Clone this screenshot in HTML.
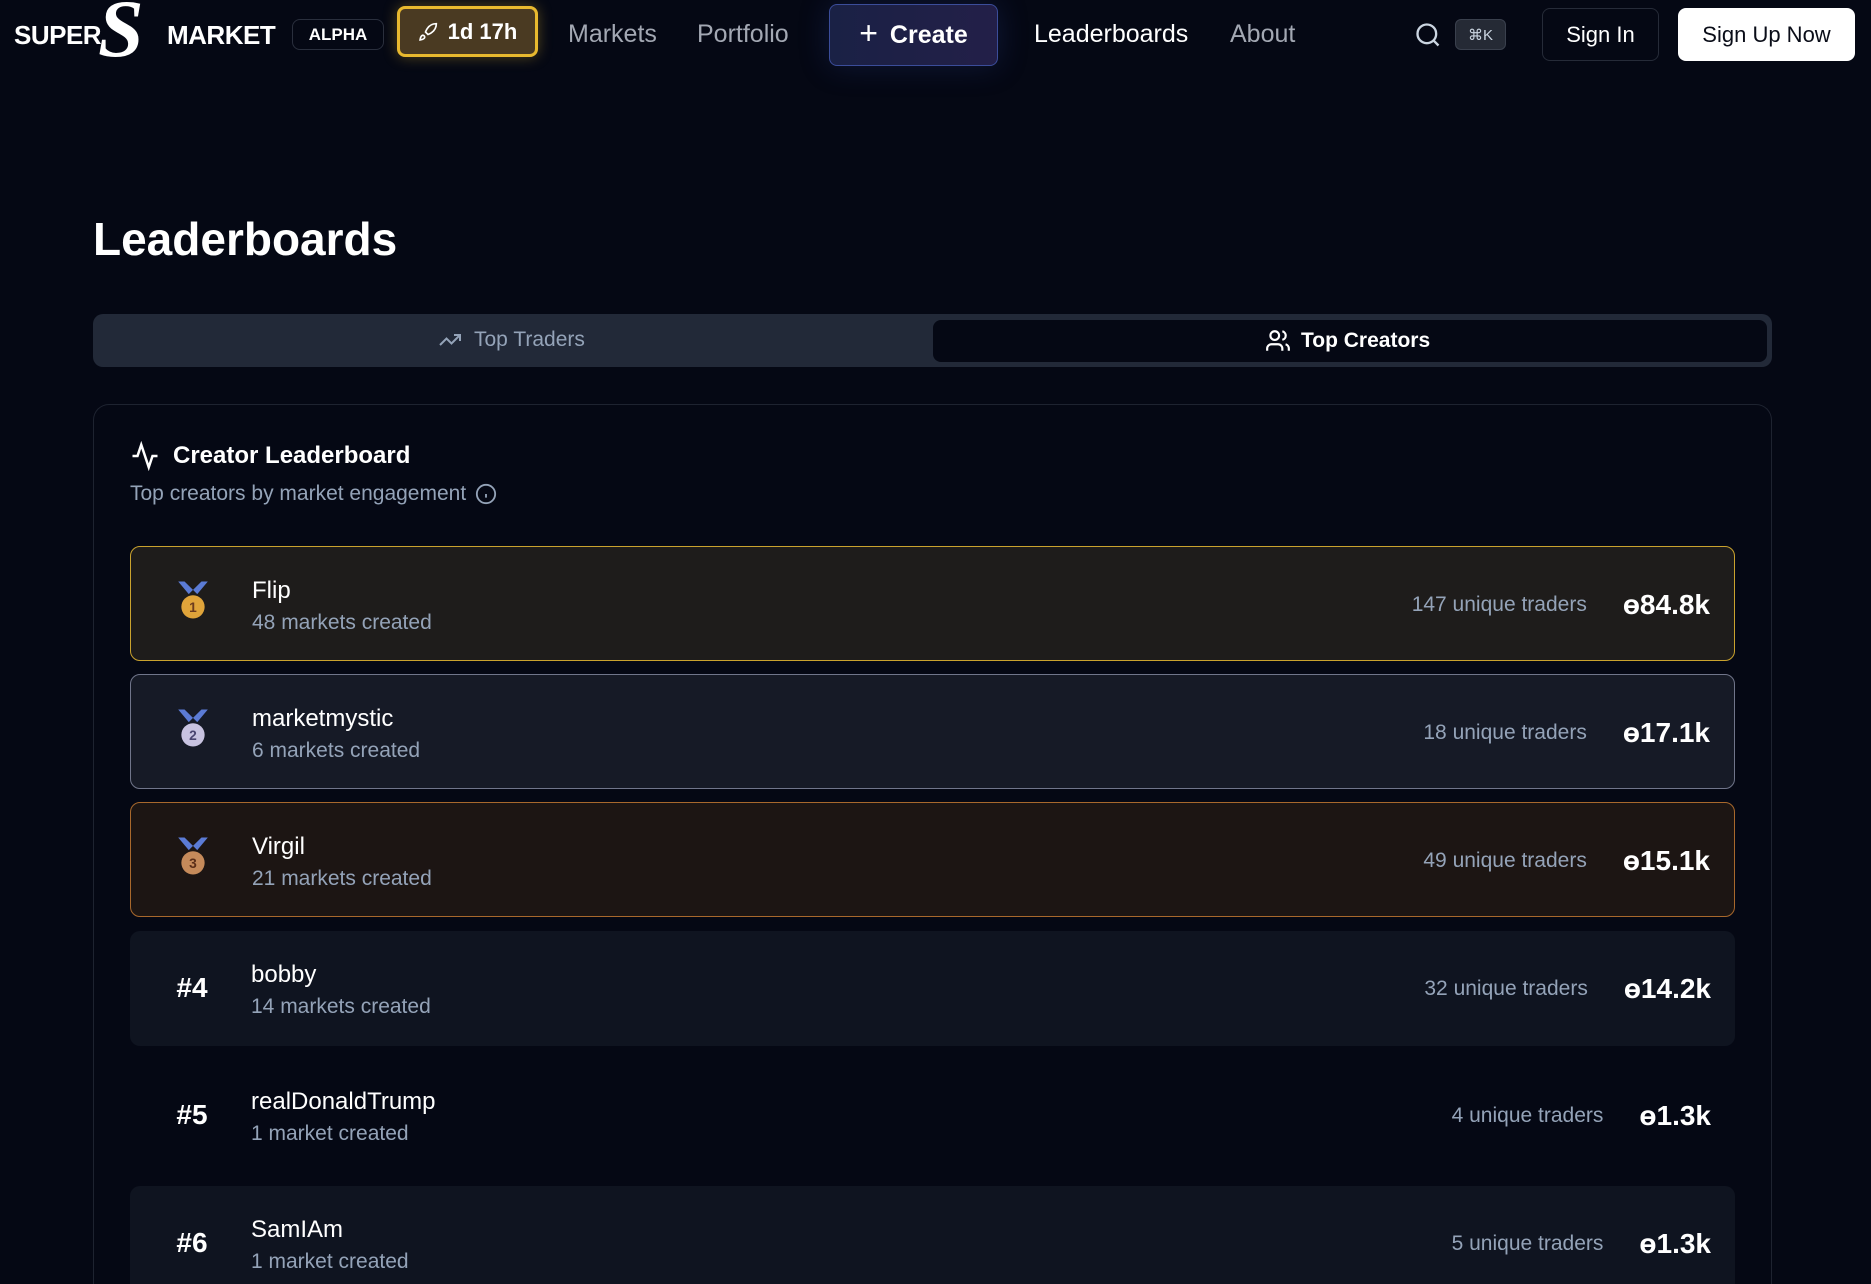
<!DOCTYPE html>
<html style="height:1284px;overflow:hidden"><head><meta charset="utf-8"><style>
*{box-sizing:border-box;margin:0;padding:0}
body{width:1871px;height:1284px;overflow:hidden;background:#050814;font-family:"Liberation Sans",sans-serif;color:#fff;position:relative}
.a{position:absolute}
.nav{font-size:25px;top:20px}
.btn{position:absolute;border-radius:8px;display:flex;align-items:center;justify-content:center}
.row{position:absolute;left:130px;width:1605px;height:115px;border-radius:10px}
.row .rk{position:absolute;left:62px;top:57px;transform:translate(-50%,-50%);font-size:28px;font-weight:bold}
.row .nm{position:absolute;left:121px;top:30px;font-size:24px}
.row .sb{position:absolute;left:121px;top:64px;font-size:21px;color:#94a3b8}
.row .rt{position:absolute;right:24px;top:0;height:115px;display:flex;align-items:center}
.row .tr{font-size:21px;color:#94a3b8;margin-right:36px}
.row .am{font-size:28px;font-weight:bold}
</style></head><body>
<div class="a" style="left:14px;top:20px;font-size:26px;font-weight:bold;letter-spacing:-0.5px">SUPER</div>
<div class="a" style="left:98px;top:-12px;font-size:82px;font-weight:bold;font-family:'Liberation Serif',serif;font-style:italic;line-height:1">S</div>
<div class="a" style="left:167px;top:20px;font-size:26px;font-weight:bold;letter-spacing:-0.5px">MARKET</div>
<div class="btn" style="left:292px;top:19px;width:92px;height:31px;border:1px solid #2a2f3d;font-size:17px;font-weight:bold">ALPHA</div>
<div class="btn" style="left:397px;top:6px;width:141px;height:51px;border:3px solid #e8b92f;background:#4a3a22;box-shadow:0 0 14px rgba(232,185,47,.35);font-size:22px;font-weight:bold"><svg width="20" height="20" viewBox="0 0 24 24" fill="none" stroke="#fff" stroke-width="2" style="margin-right:10px"><path d="M4.5 16.5c-1.5 1.3-2 5-2 5s3.7-.5 5-2c.7-.8.7-2.1-.1-2.9a2.2 2.2 0 0 0-2.9-.1zM12 15l-3-3a22 22 0 0 1 2-4A12.9 12.9 0 0 1 22 2c0 2.7-.8 7.5-6 11a22 22 0 0 1-4 2z"/></svg>1d 17h</div>
<div class="a nav" style="left:568px;color:#a3a8b3">Markets</div>
<div class="a nav" style="left:697px;color:#a3a8b3">Portfolio</div>
<div class="btn" style="left:829px;top:4px;width:169px;height:62px;border:1px solid #3b4d9a;background:linear-gradient(90deg,#1a2145,#231f48);font-size:25px;font-weight:bold;box-shadow:0 0 30px rgba(40,60,140,.3)"><span style="font-size:32px;font-weight:normal;margin-right:12px;margin-top:-4px">+</span>Create</div>
<div class="a nav" style="left:1034px;color:#fff">Leaderboards</div>
<div class="a nav" style="left:1230px;color:#a3a8b3">About</div>
<svg class="a" style="left:1414px;top:21px" width="28" height="28" viewBox="0 0 24 24" fill="none" stroke="#cbd5e1" stroke-width="2"><circle cx="11" cy="11" r="8"/><path d="M21 21l-4.3-4.3"/></svg>
<div class="btn" style="left:1455px;top:19px;width:51px;height:31px;background:#252a35;border:1px solid #3a404d;font-size:15px;color:#cbd5e1;border-radius:6px">⌘K</div>
<div class="btn" style="left:1542px;top:8px;width:117px;height:53px;border:1px solid #262b38;font-size:22px">Sign In</div>
<div class="btn" style="left:1678px;top:8px;width:177px;height:53px;background:#fff;color:#0a0d18;font-size:22px">Sign Up Now</div>

<div class="a" style="left:93px;top:212px;font-size:46px;font-weight:bold">Leaderboards</div>

<div class="a" style="left:93px;top:314px;width:1679px;height:53px;background:#222938;border-radius:10px"></div>
<div class="a" style="left:933px;top:320px;width:834px;height:42px;background:#050814;border-radius:8px"></div>
<div class="a" style="left:438px;top:328px;font-size:21px;color:#94a3b8;display:flex;align-items:center"><svg width="24" height="24" viewBox="0 0 24 24" fill="none" stroke="#94a3b8" stroke-width="2" style="margin-right:12px"><path d="M22 7l-8.5 8.5-5-5L2 17M16 7h6v6"/></svg>Top Traders</div>
<div class="a" style="left:1265px;top:328px;font-size:21px;font-weight:bold;display:flex;align-items:center"><svg width="26" height="26" viewBox="0 0 24 24" fill="none" stroke="#fff" stroke-width="2" style="margin-right:10px"><path d="M16 21v-2a4 4 0 0 0-4-4H6a4 4 0 0 0-4 4v2"/><circle cx="9" cy="7" r="4"/><path d="M22 21v-2a4 4 0 0 0-3-3.9M16 3.1a4 4 0 0 1 0 7.8"/></svg>Top Creators</div>

<div class="a" style="left:93px;top:404px;width:1679px;height:880px;border:1px solid #1e2330;border-bottom:none;border-radius:16px 16px 0 0"></div>
<svg class="a" style="left:130px;top:441px" width="30" height="30" viewBox="0 0 24 24" fill="none" stroke="#fff" stroke-width="2"><path d="M22 12h-4l-3 9L9 3l-3 9H2"/></svg>
<div class="a" style="left:173px;top:442px;font-size:24px;font-weight:bold">Creator Leaderboard</div>
<div class="a" style="left:130px;top:482px;font-size:21px;color:#94a3b8;display:flex;align-items:center">Top creators by market engagement<svg width="22" height="22" viewBox="0 0 24 24" fill="none" stroke="#94a3b8" stroke-width="2" style="margin-left:9px"><circle cx="12" cy="12" r="10"/><path d="M12 16v-4M12 8h.01"/></svg></div>

<div class="row" style="top:546px;background:#1e1c1b;border:1px solid #c9a22e">
<div class="rk"><svg width="36" height="44" viewBox="0 0 34 40"><path d="M3 2l10 12 4-4 4 4 10-12-6 0-8 8-8-8z" fill="#5b7bd5"/><circle cx="17" cy="26" r="11" fill="#e0a43a"/><text x="17" y="31" font-size="13" text-anchor="middle" fill="#6b3b1e" font-family="Liberation Sans">1</text></svg></div>
<div class="nm">Flip</div><div class="sb">48 markets created</div>
<div class="rt"><span class="tr">147 unique traders</span><span class="am">ө84.8k</span></div></div>

<div class="row" style="top:674px;background:#161a26;border:1px solid #70758a">
<div class="rk"><svg width="36" height="44" viewBox="0 0 34 40"><path d="M3 2l10 12 4-4 4 4 10-12-6 0-8 8-8-8z" fill="#5b7bd5"/><circle cx="17" cy="26" r="11" fill="#c8c3e0"/><text x="17" y="31" font-size="13" text-anchor="middle" fill="#4a4570" font-family="Liberation Sans">2</text></svg></div>
<div class="nm">marketmystic</div><div class="sb">6 markets created</div>
<div class="rt"><span class="tr">18 unique traders</span><span class="am">ө17.1k</span></div></div>

<div class="row" style="top:802px;background:#1c1513;border:1px solid #a8682c">
<div class="rk"><svg width="36" height="44" viewBox="0 0 34 40"><path d="M3 2l10 12 4-4 4 4 10-12-6 0-8 8-8-8z" fill="#5b7bd5"/><circle cx="17" cy="26" r="11" fill="#c58a5a"/><text x="17" y="31" font-size="13" text-anchor="middle" fill="#5a2e18" font-family="Liberation Sans">3</text></svg></div>
<div class="nm">Virgil</div><div class="sb">21 markets created</div>
<div class="rt"><span class="tr">49 unique traders</span><span class="am">ө15.1k</span></div></div>

<div class="row" style="top:931px;background:#0f1420">
<div class="rk">#4</div><div class="nm">bobby</div><div class="sb">14 markets created</div>
<div class="rt"><span class="tr">32 unique traders</span><span class="am">ө14.2k</span></div></div>

<div class="row" style="top:1058px">
<div class="rk">#5</div><div class="nm">realDonaldTrump</div><div class="sb">1 market created</div>
<div class="rt"><span class="tr">4 unique traders</span><span class="am">ө1.3k</span></div></div>

<div class="row" style="top:1186px;height:98px;border-radius:10px 10px 0 0;background:#0f1420">
<div class="rk">#6</div><div class="nm">SamIAm</div><div class="sb">1 market created</div>
<div class="rt"><span class="tr">5 unique traders</span><span class="am">ө1.3k</span></div></div>
</body></html>
